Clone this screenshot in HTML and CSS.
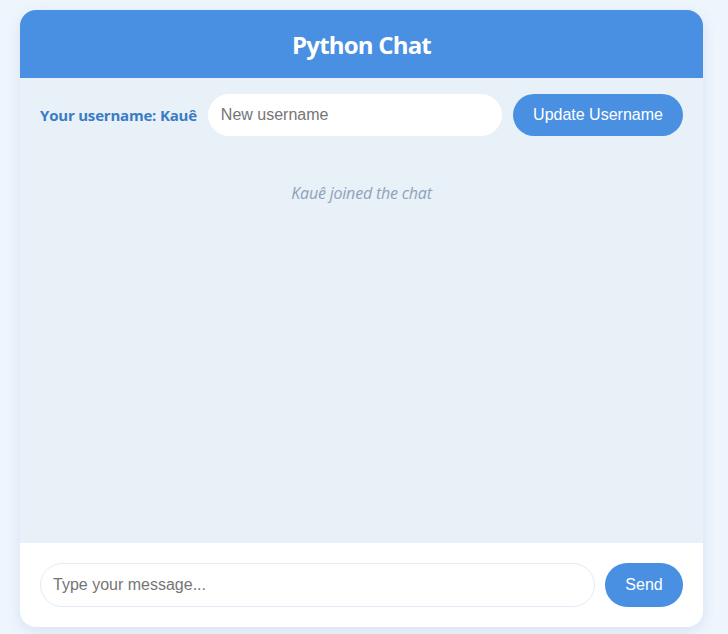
FILE: index.html
```html
<!DOCTYPE html>
<html lang="en">
<head>
<meta charset="utf-8">
<title>Python Chat</title>
<link rel="stylesheet" href="styles.css">
</head>
<body>
<div class="card">
  <header class="header">
    <h1 class="title">Python Chat</h1>
  </header>
  <div class="user-row">
    <span class="user-label">Your username: Kauê</span>
    <input class="user-input" type="text" placeholder="New username">
    <button class="btn btn-update">Update Username</button>
  </div>
  <div class="messages">
    <div class="system-msg">Kauê joined the chat</div>
  </div>
  <footer class="footer">
    <input class="msg-input" type="text" placeholder="Type your message...">
    <button class="btn btn-send">Send</button>
  </footer>
</div>
</body>
</html>
```

FILE: styles.css
```css
html, body {
  margin: 0;
  padding: 0;
}
body {
  background: #eef5fd;
  font-family: "Segoe UI", "Open Sans", "Noto Sans", sans-serif;
  padding: 10px 25px 7px 20px;
}
.card {
  width: 683px;
  height: 617px;
  display: flex;
  flex-direction: column;
  background: #e8f0f8;
  border-radius: 16px;
  overflow: hidden;
  box-shadow: 0 4px 14px rgba(60, 100, 150, 0.12);
}
.header {
  background: #4a90e2;
  height: 68px;
  display: flex;
  align-items: center;
  justify-content: center;
  flex: none;
}
.title {
  margin: 0;
  color: #ffffff;
  font-size: 24px;
  font-weight: 700;
  letter-spacing: -0.8px;
}
.user-row {
  display: flex;
  align-items: center;
  padding: 16px 20px 16px 20px;
  gap: 11px;
  flex: none;
}
.user-label {
  color: #3a7bc6;
  font-weight: 700;
  font-size: 15px;
  white-space: nowrap;
  letter-spacing: -0.2px;
}
.user-input,
.msg-input {
  font-family: "Liberation Sans", Arial, sans-serif;
  font-size: 16px;
  height: 42px;
  box-sizing: border-box;
  border-radius: 21px;
  padding: 0 12px;
  outline: none;
  background: #ffffff;
  color: #333;
}
.user-input {
  flex: 1;
  min-width: 0;
  border: 1px solid #ffffff;
}
.user-input::placeholder,
.msg-input::placeholder {
  color: #757575;
}
.btn {
  font-family: "Liberation Sans", Arial, sans-serif;
  font-size: 16px;
  color: #ffffff;
  background: #4a90e2;
  border: none;
  border-radius: 22px;
  padding: 0 20px;
  cursor: pointer;
  flex: none;
}
.btn-update {
  height: 42px;
  width: 170px;
}
.messages {
  flex: 1;
  padding: 20px;
}
.system-msg {
  text-align: center;
  font-style: italic;
  color: #8fa2b8;
  font-size: 16px;
  letter-spacing: -0.2px;
  margin: 10px 0;
}
.footer {
  flex: none;
  height: 84px;
  box-sizing: border-box;
  background: #ffffff;
  display: flex;
  align-items: center;
  padding: 0 20px;
  gap: 10px;
}
.msg-input {
  flex: 1;
  min-width: 0;
  height: 44px;
  border-radius: 22px;
  border: 1px solid #e1ebf5;
}
.btn-send {
  height: 44px;
  width: 78px;
}
```
